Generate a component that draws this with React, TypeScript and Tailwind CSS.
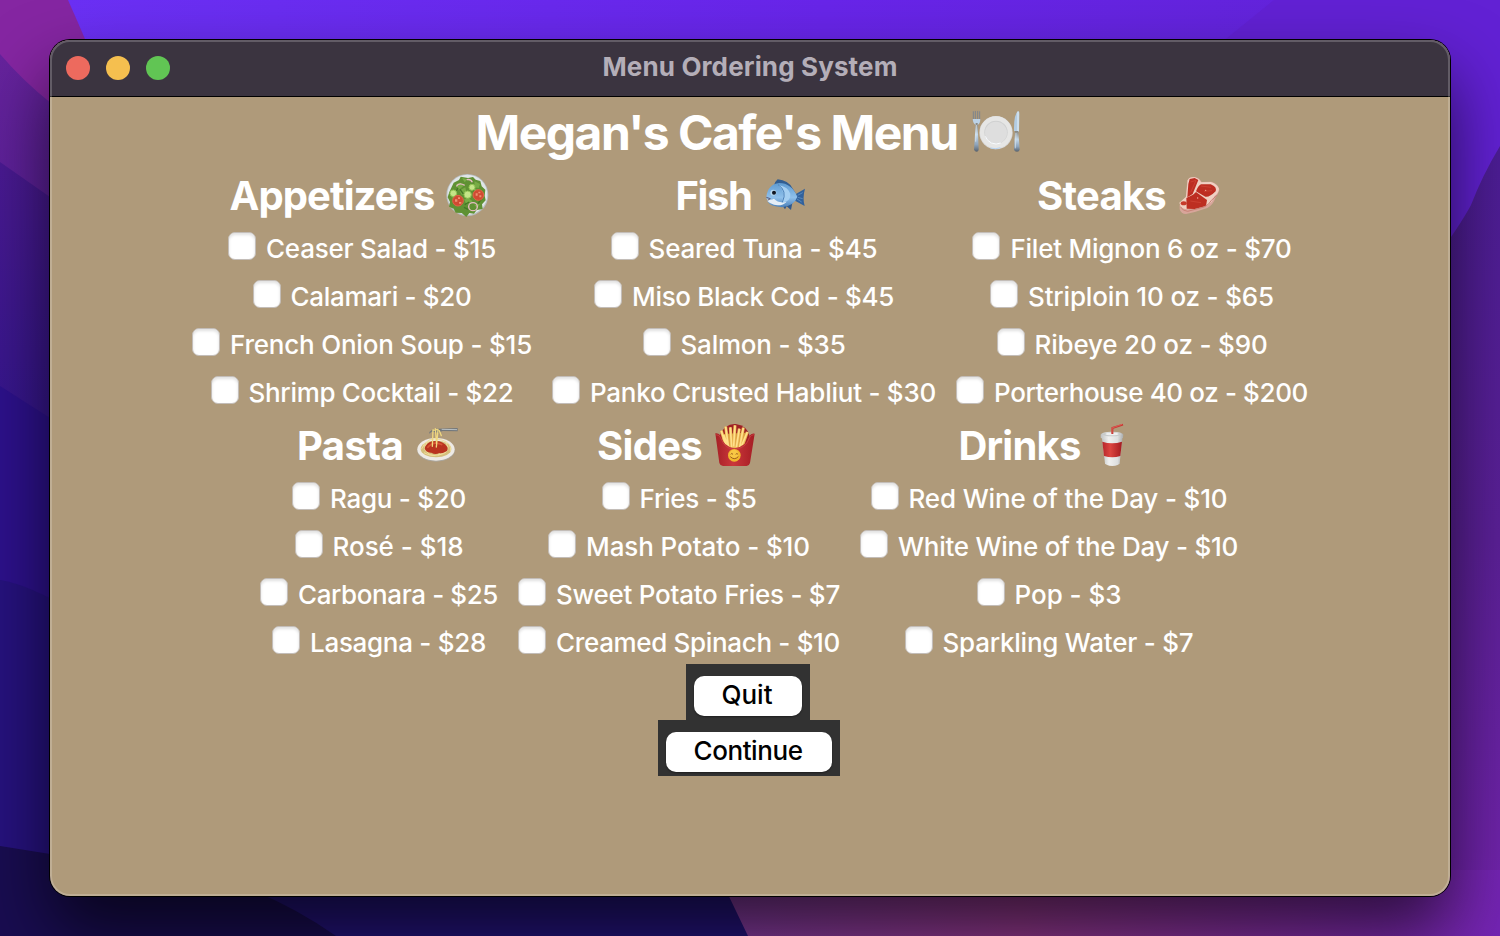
import React, { useLayoutEffect, useRef } from "react";

type FitProps = { text: string; width: number; className?: string };

/** A single line of text whose tracking is adjusted to fill the given width. */
function Fit({ text, width, className = "" }: FitProps) {
  const ref = useRef<HTMLSpanElement>(null);
  useLayoutEffect(() => {
    const el = ref.current;
    if (!el) return;
    el.style.letterSpacing = "0px";
    const natural = el.getBoundingClientRect().width;
    el.style.letterSpacing = `${(width - natural) / text.length}px`;
  }, [text, width]);
  return (
    <span ref={ref} className={`inline-block shrink-0 whitespace-pre ${className}`}>
      {text}
    </span>
  );
}

function PlateIcon() {
  return (
    <svg viewBox="18 15 171 171" className="h-[57px] w-[57px] shrink-0">
      <defs>
        <linearGradient id="steel" x1="0" y1="0" x2="0" y2="1">
          <stop offset="0" stopColor="#85857f" />
          <stop offset=".4" stopColor="#c3d8ea" />
          <stop offset=".75" stopColor="#8ea5bd" />
          <stop offset="1" stopColor="#59626c" />
        </linearGradient>
      </defs>
      <g stroke="#7e858c" strokeWidth="3" strokeLinecap="round">
        <path d="M40 38V64M46 37V64M53 37V64M59 38V64" />
      </g>
      <path d="M38 60q1 14 9 18h6q8-4 8-18z" fill="#bcd2e6" />
      <path d="M47 72h6l3 80q-1 6-6 6t-8-6z" fill="url(#steel)" />
      <path d="M49 78l-2 50" stroke="#e2effa" strokeWidth="2" />
      <circle cx="108" cy="101" r="50" fill="#d8d8d8" />
      <circle cx="108" cy="100" r="48" fill="#e6e6e5" />
      <circle cx="108" cy="100" r="35" fill="#cfd0d0" />
      <circle cx="108" cy="101" r="33" fill="#dedede" />
      <path d="M76 112a34 34 0 0 0 46 20" fill="none" stroke="#f9fcff" strokeWidth="3" />
      <path d="M91 147q17 5 30-1" stroke="#b5d3f4" strokeWidth="3" fill="none" />
      <path d="M162 96q-1-50 12-60 5 0 4 14l-1 48z" fill="#b3cce2" />
      <path d="M174 38v60" stroke="#e7f1f8" strokeWidth="3" />
      <path d="M165 96h10l4 56q-1 6-8 6t-9-6z" fill="url(#steel)" />
      <path d="M168 102l-2 46" stroke="#d9e5ef" strokeWidth="2" />
    </svg>
  );
}

function SaladIcon() {
  return (
    <svg viewBox="15 0 150 150" className="h-[50px] w-[50px] shrink-0">
      <circle cx="82" cy="75" r="63" fill="#b8bec2" />
      <circle cx="82" cy="74" r="60" fill="#e0e5e6" />
      <path d="M41 38l16-8 5-10 22 4 15-3 8 8 14 4 4 16 11 10-2 18 3 14-11 12 2 14-18 3-8 11-14-2-9 12-14-12-18-1-6-12-14-6 3-14-7-14 5-16z" fill="#5f9133" />
      <path d="M48 42l14-4 8 10-14 12zM66 24l16 4-8 9zM104 34l16 8-4 12-14-2zM58 62l18-10 4 18-14 6zM94 50l16 8-10 8zM72 88l16-2 10 8-18 10zM102 104l18-2-8 12zM34 84l10-6 4 10z" fill="#78ac45" />
      <path d="M60 58l10 14M102 64l-12-10M74 104l14-8M114 100l12-14M48 64l6-10M84 118l-12-6" stroke="#447626" strokeWidth="4" />
      <g fill="none" stroke="#e7bbc3" strokeWidth="4">
        <path d="M49 49q8-13 25-3" />
        <path d="M80 29q12-3 17 8" />
        <ellipse cx="99" cy="110" rx="13" ry="12" />
      </g>
      <g fill="#c5e587" stroke="#91c354" strokeWidth="3">
        <circle cx="40" cy="70" r="10" />
        <circle cx="83" cy="74" r="11" />
        <circle cx="96" cy="52" r="9" />
      </g>
      <g fill="#d04a32" stroke="#e16346" strokeWidth="3">
        <circle cx="54" cy="92" r="16" />
        <circle cx="115" cy="75" r="16" />
      </g>
      <path d="M45 88h7v7h-7zM57 96h7v5h-7zM107 70h6v7h-6zM118 76h6v6h-6zM54 82h6v5h-6zM115 65h6v5h-6z" fill="#ed9170" />
    </svg>
  );
}

function FishIcon() {
  return (
    <svg viewBox="24 0 150 150" className="h-[50px] w-[50px] shrink-0">
      <defs>
        <linearGradient id="scales" x1="0" y1="0" x2="0" y2="1">
          <stop offset="0" stopColor="#5f9bd1" />
          <stop offset=".6" stopColor="#8fc0eb" />
          <stop offset="1" stopColor="#4a80b9" />
        </linearGradient>
      </defs>
      <path d="M56 48q4-14 12-20 32 4 44 26l10 16-30-10z" fill="#315d91" />
      <path d="M116 76l34-20q-8 27-1 52l-33-18z" fill="#31619c" />
      <path d="M80 104l10 14 5-9 13 11 5-26z" fill="#31588a" />
      <path d="M34 81q4-38 39-42 36 0 54 41-8 26-46 32-35-2-44-18l7-3-9-3z" fill="url(#scales)" />
      <path d="M37 88q12 3 20-2 14 15 38 9-9 11-27 11-24-4-31-14z" fill="#e5eef6" />
      <path d="M70 46q24 20 10 52 29-4 26-27-7-21-36-25z" fill="#a5cff2" />
      <path d="M69 44q29 18 13 53" fill="none" stroke="#4a80b8" strokeWidth="3" />
      <circle cx="55" cy="68" r="9" fill="#b6d7ef" />
      <circle cx="57" cy="68" r="6" fill="#111722" />
      <path d="M34 82l12 4-8 5" fill="none" stroke="#5c5a78" strokeWidth="3" />
      <path d="M128 76l15-8M128 82l15 4M126 87l14 9" stroke="#6b9dce" strokeWidth="2" />
    </svg>
  );
}

function SteakIcon() {
  return (
    <svg viewBox="21 0 150 150" className="h-[50px] w-[50px] shrink-0">
      <path d="M29 105l18-20 5-54q5-12 23-10 14 3 20 15l29-1q21 6 24 24-4 15-12 25-6 20-24 30-34 12-64 18-15 0-19-14z" fill="#d8a59a" />
      <path d="M28 98l20-18 5-49q5-12 21-9 14 3 19 15l29-1q18 5 25 20-1 13-14 23-5 18-22 28l-53 10q-25 4-30-19z" fill="#efd0c2" />
      <path d="M55 42l4-15 15-3 11 6-17 42-16 10zM78 64q6-16 15-21l29 0q20 8 15 21-19 19-31 16zM49 84l20-10 9-8 33 24-3 18-34 9-24-1z" fill="#bd2e22" />
      <path d="M62 36l16-5-16 36M93 48l30 4M102 64l24-2M61 93l32 5" fill="none" stroke="#cb4032" strokeWidth="3" />
      <ellipse cx="41" cy="100" rx="9" ry="6" fill="#c63a2b" />
      <path d="M32 111q6 12 21 13l49-13q17-8 22-20l18-16" fill="none" stroke="#c98176" strokeWidth="3" />
      <circle cx="83" cy="84" r="2" fill="#efb3a0" />
      <circle cx="107" cy="61" r="2" fill="#efb3a0" />
    </svg>
  );
}

function PastaIcon() {
  return (
    <svg viewBox="3 0 150 150" className="h-[50px] w-[50px] shrink-0">
      <ellipse cx="78" cy="91" rx="56" ry="34" fill="#aaa79f" />
      <ellipse cx="78" cy="88" rx="56" ry="34" fill="#eeeae5" />
      <ellipse cx="78" cy="87" rx="46" ry="25" fill="#d5bf7b" />
      <g fill="none" stroke="#f0df9d" strokeWidth="3">
        <path d="M34 88q18-43 62-28 31 10 25 35M42 74q24 31 65 23M42 98q31 19 66-4M50 67q-10 39 25 40M108 68q20 30-25 38M60 62q-26 18-10 35" />
      </g>
      <path d="M44 85q5-17 22-21 31-5 46 17 4 12-7 15-9 5-17 3-12 6-24-1-16 1-20-13z" fill="#b9331f" />
      <path d="M52 83q18-22 45-9" fill="none" stroke="#d75535" strokeWidth="5" />
      <path d="M58 36l11-8 14-2 60-2v10l-45-1-14 5-19-3-7 6z" fill="#72777b" />
      <path d="M95 28l46 1" stroke="#b7bfc4" strokeWidth="3" />
      <g fill="none" stroke="#efd77f" strokeWidth="4" strokeLinecap="round">
        <path d="M69 29l-2 50M76 26l4 49M84 30l-5 51M88 32l6 15M69 31l15-3" />
      </g>
    </svg>
  );
}

function FriesIcon() {
  return (
    <svg viewBox="19 -2 150 150" className="h-[50px] w-[50px] shrink-0">
      <defs>
        <linearGradient id="carton" x1="0" x2="1">
          <stop offset="0" stopColor="#a62026" />
          <stop offset=".45" stopColor="#ca373b" />
          <stop offset="1" stopColor="#a51d24" />
        </linearGradient>
      </defs>
      <path d="M45 45Q60 8 93 10q32 4 42 35l-12 44H55z" fill="#9f1f25" />
      <path d="M54 40l70-4-9 44-24 8-26-6z" fill="#d79a3e" />
      <g stroke="#eab653" strokeWidth="9">
        <path d="M50 30l15 52M63 18l8 66M77 20l4 65M91 14l-4 69M104 24l-9 62M116 21l-11 64M128 34l-17 47M57 43l19 44" />
      </g>
      <g stroke="#ffe08b" strokeWidth="5">
        <path d="M50 30l15 48M63 18l8 60M77 20l4 61M91 14l-4 64M104 24l-9 56M116 21l-11 59M128 34l-17 41M57 43l16 39" />
      </g>
      <path d="M32 38q9-1 15 6 9 34 42 39 36-4 47-39 4-6 14-5l-14 88q-2 8-10 9H55q-9-1-11-9z" fill="url(#carton)" />
      <path d="M33 42q12 0 15 10 13 34 41 34 34-2 45-34 5-11 14-10" fill="none" stroke="#d04a48" strokeWidth="2" />
      <circle cx="89" cy="104" r="19" fill="#f1b72e" />
      <circle cx="88" cy="100" r="13" fill="#f8c744" />
      <path d="M78 101q3-5 7 0M93 101q4-5 7 0M77 108q12 12 24 0" fill="none" stroke="#8c4c18" strokeWidth="2.5" />
    </svg>
  );
}

function DrinkIcon() {
  return (
    <svg viewBox="16 0 150 150" className="h-[50px] w-[50px] shrink-0">
      <defs>
        <linearGradient id="cup" x1="0" x2="1">
          <stop offset="0" stopColor="#bfc2c2" />
          <stop offset=".35" stopColor="#f0f0ef" />
          <stop offset=".75" stopColor="#dddfdf" />
          <stop offset="1" stopColor="#a9abab" />
        </linearGradient>
        <linearGradient id="sleeve" x1="0" x2="1">
          <stop offset="0" stopColor="#b6262a" />
          <stop offset=".4" stopColor="#dc4540" />
          <stop offset="1" stopColor="#a41b20" />
        </linearGradient>
      </defs>
      <path d="M51 48h63l-9 82q-2 7-22 8-20-1-22-8z" fill="url(#cup)" />
      <path d="M48 44q3-9 34-9t34 9l-1 9q-9 6-33 6t-34-6z" fill="url(#cup)" />
      <ellipse cx="82" cy="43" rx="29" ry="6" fill="#c7caca" />
      <ellipse cx="82" cy="42" rx="20" ry="4" fill="#eeefef" />
      <path d="M53 65q29 9 59 0l-5 43q-24 8-49 0z" fill="url(#sleeve)" />
      <path d="M83 42V24l32-10" fill="none" stroke="#c83a35" strokeWidth="6" strokeLinejoin="round" />
      <path d="M82 38V24l30-11" fill="none" stroke="#e56a60" strokeWidth="2" />
    </svg>
  );
}

type Item = [label: string, width: number];
type Section = {
  title: string;
  titleWidth: number;
  gap: string;
  icon: () => React.ReactElement;
  items: Item[];
};

const topSections: Section[] = [
  {
    title: "Appetizers",
    titleWidth: 205,
    gap: "gap-[10px]",
    icon: SaladIcon,
    items: [
      ["Ceaser Salad - $15", 230],
      ["Calamari - $20", 181],
      ["French Onion Soup - $15", 302],
      ["Shrimp Cocktail - $22", 265],
    ],
  },
  {
    title: "Fish",
    titleWidth: 76,
    gap: "gap-[11px]",
    icon: FishIcon,
    items: [
      ["Seared Tuna - $45", 229],
      ["Miso Black Cod - $45", 262],
      ["Salmon - $35", 165],
      ["Panko Crusted Habliut - $30", 346],
    ],
  },
  {
    title: "Steaks",
    titleWidth: 129,
    gap: "gap-[11px]",
    icon: SteakIcon,
    items: [
      ["Filet Mignon 6 oz - $70", 281],
      ["Striploin 10 oz - $65", 246],
      ["Ribeye 20 oz - $90", 233],
      ["Porterhouse 40 oz - $200", 314],
    ],
  },
];

const bottomSections: Section[] = [
  {
    title: "Pasta",
    titleWidth: 106,
    gap: "gap-[8px]",
    icon: PastaIcon,
    items: [
      ["Ragu - $20", 136],
      ["Rosé - $18", 131],
      ["Carbonara - $25", 200],
      ["Lasagna - $28", 176],
    ],
  },
  {
    title: "Sides",
    titleWidth: 105,
    gap: "gap-[9px]",
    icon: FriesIcon,
    items: [
      ["Fries - $5", 117],
      ["Mash Potato - $10", 224],
      ["Sweet Potato Fries - $7", 284],
      ["Creamed Spinach - $10", 284],
    ],
  },
  {
    title: "Drinks",
    titleWidth: 122,
    gap: "gap-[9px]",
    icon: DrinkIcon,
    items: [
      ["Red Wine of the Day - $10", 319],
      ["White Wine of the Day - $10", 340],
      ["Pop - $3", 107],
      ["Sparkling Water - $7", 251],
    ],
  },
];

function MenuSection({ title, titleWidth, gap, icon: Icon, items }: Section) {
  return (
    <section className="flex flex-col items-center">
      <h2 className={`flex h-[58px] items-center pt-1 text-[40px] leading-[58px] font-bold ${gap}`}>
        <Fit text={title} width={titleWidth} className="mt-0.5" />
        <Icon />
      </h2>
      {items.map(([label, width]) => (
        <label key={label} className="flex h-12 items-center gap-2.5 text-[26px] leading-[48px]">
          <span className="h-7 w-7 shrink-0 rounded-[7px] border border-[#c3bdb8] bg-white shadow-[inset_0_2px_3px_rgba(0,0,0,0.12)]" />
          <Fit text={label} width={width} className="mt-[5px]" />
        </label>
      ))}
    </section>
  );
}

function PushButton({ text, width, className }: { text: string; width: number; className: string }) {
  return (
    <div className="h-14 bg-[#323232] px-2 pt-3 pb-1">
      <button
        className={`flex h-10 items-center justify-center rounded-[10px] bg-white pr-0.5 pb-0.5 text-[26px] leading-[38px] text-black shadow-[0_1px_2px_rgba(0,0,0,0.4)] ${className}`}
      >
        <Fit text={text} width={width} />
      </button>
    </div>
  );
}

function Wallpaper() {
  return (
    <svg viewBox="0 0 1500 936" className="absolute inset-0 h-full w-full">
      <defs>
        <linearGradient id="sky" x1="0" y1="0" x2="1" y2="0">
          <stop offset="0" stopColor="#6b31f5" />
          <stop offset=".55" stopColor="#6825e9" />
          <stop offset="1" stopColor="#6123d6" />
        </linearGradient>
        <linearGradient id="left" x1="0" y1="0" x2="0" y2="1">
          <stop offset="0" stopColor="#66239d" />
          <stop offset="1" stopColor="#571f98" />
        </linearGradient>
        <linearGradient id="deep" x1="0" y1="0" x2="0" y2="1">
          <stop offset="0" stopColor="#4a1a92" />
          <stop offset=".5" stopColor="#2b148a" />
          <stop offset="1" stopColor="#24126e" />
        </linearGradient>
        <linearGradient id="right" x1="0" y1="0" x2="0" y2="1">
          <stop offset="0" stopColor="#4c1d95" />
          <stop offset=".5" stopColor="#5b2097" />
          <stop offset="1" stopColor="#7424ae" />
        </linearGradient>
        <linearGradient id="floor" x1="0" y1="0" x2="1" y2="0">
          <stop offset="0" stopColor="#803a9e" />
          <stop offset=".4" stopColor="#92388c" />
          <stop offset="1" stopColor="#7424b4" />
        </linearGradient>
      </defs>
      <path d="M0 0h1500v936H0z" fill="url(#sky)" />
      <path d="M0 0h68q20 45 34 80v80H0z" fill="#8526a2" />
      <path d="M0 54q22 26 52 50l50 60v120H0z" fill="url(#left)" />
      <path d="M0 162l60 42 100 80v652H0z" fill="url(#deep)" />
      <path d="M0 386l50 32v180L0 580z" fill="#2d118c" />
      <path d="M0 580q30 5 70 30v326H0z" fill="#26127e" />
      <path d="M1274 0h226v150q-18 30-30 62l-40 60H1200V60z" fill="#6221d4" />
      <path d="M1500 146q-18 30-29 59-13 24-41 61v670h70z" fill="url(#right)" />
      <path d="M0 880h780v56H0z" fill="#231378" />
      <path d="M0 846l50 8q170 0 286 82H0z" fill="#190d51" />
      <path d="M700 836l48 100h752V870H1420V836z" fill="url(#floor)" />
    </svg>
  );
}

export default function App() {
  return (
    <div className="relative h-[936px] w-[1500px] overflow-hidden font-['Inter','Liberation_Sans',sans-serif] font-[450]">
      <Wallpaper />
      <div className="relative px-[50px] pt-10">
        <div className="rounded-[20px] shadow-[0_0_0_1px_#000,0_36px_70px_rgba(0,0,0,0.65)]">
          <main className="relative flex h-[856px] w-[1400px] flex-col overflow-hidden rounded-[20px] bg-[#af9a7a]">
            <header className="flex h-[57px] shrink-0 items-center border-b border-black bg-[#3b3440]">
              <div className="flex w-[200px] gap-4 pl-4">
                <span className="h-6 w-6 rounded-full bg-[#ed6a5e]" />
                <span className="h-6 w-6 rounded-full bg-[#f5bf4f]" />
                <span className="h-6 w-6 rounded-full bg-[#61c554]" />
              </div>
              <div className="flex flex-1 justify-center pb-0.5 text-[26px] leading-8 font-bold text-[#b4aeb8]">
                <Fit text="Menu Ordering System" width={295} />
              </div>
              <div className="w-[200px]" />
            </header>
            <div className="flex flex-1 flex-col items-center text-white">
              <h1 className="mr-[2px] flex h-[67px] items-center gap-[8px] pt-1 text-[48px] leading-[64px] font-bold">
                <Fit text="Megan's Cafe's Menu" width={482} />
                <PlateIcon />
              </h1>
              <div className="flex gap-5">
                {topSections.map((s) => (
                  <MenuSection key={s.title} {...s} />
                ))}
              </div>
              <div className="mr-0.5 flex gap-5">
                {bottomSections.map((s) => (
                  <MenuSection key={s.title} {...s} />
                ))}
              </div>
              <div className="mr-1 flex flex-col items-center">
                <PushButton text="Quit" width={51} className="w-[108px]" />
                <div className="-mr-0.5">
                  <PushButton text="Continue" width={109} className="w-[166px]" />
                </div>
              </div>
            </div>
            <div className="pointer-events-none absolute inset-0 rounded-[20px] border-2 border-white/20" />
          </main>
        </div>
      </div>
    </div>
  );
}
